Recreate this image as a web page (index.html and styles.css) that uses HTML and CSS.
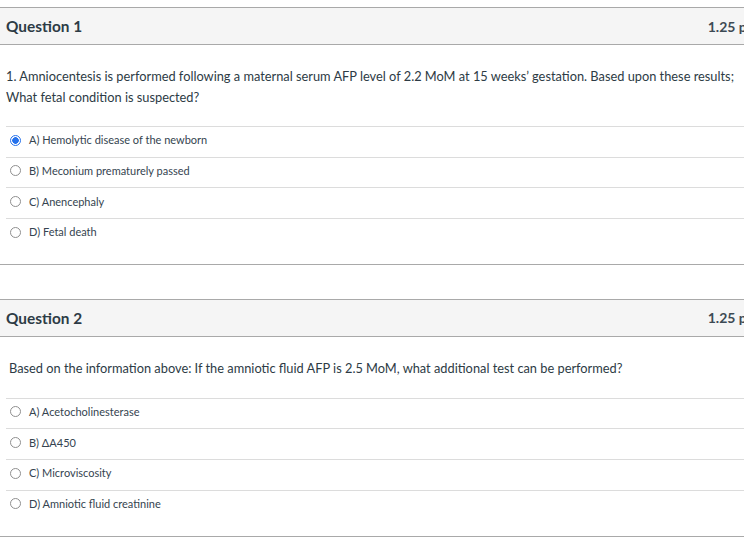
FILE: index.html
```html
<!DOCTYPE html>
<html>
<head>
<meta charset="utf-8">
<link rel="stylesheet" href="styles.css">
</head>
<body>
<div class="page">
  <section class="question">
    <header class="q-header">
      <h2 class="q-title">Question 1</h2>
      <span class="q-points">1.25 pts</span>
    </header>
    <div class="q-text">1. Amniocentesis is performed following a maternal serum AFP level of 2.2 MoM at 15 weeks’ gestation. Based upon these results; What fetal condition is suspected?</div>
    <ul class="answers">
      <li class="answer"><span class="radio checked"></span><span class="label">A) Hemolytic disease of the newborn</span></li>
      <li class="answer"><span class="radio"></span><span class="label">B) Meconium prematurely passed</span></li>
      <li class="answer"><span class="radio"></span><span class="label">C) Anencephaly</span></li>
      <li class="answer"><span class="radio"></span><span class="label">D) Fetal death</span></li>
    </ul>
  </section>
  <section class="question question-last">
    <header class="q-header">
      <h2 class="q-title">Question 2</h2>
      <span class="q-points">1.25 pts</span>
    </header>
    <div class="q-text q-text-indent">Based on the information above: If the amniotic fluid AFP is 2.5 MoM, what additional test can be performed?</div>
    <ul class="answers">
      <li class="answer"><span class="radio"></span><span class="label">A) Acetocholinesterase</span></li>
      <li class="answer"><span class="radio"></span><span class="label">B) ΔA450</span></li>
      <li class="answer"><span class="radio"></span><span class="label">C) Microviscosity</span></li>
      <li class="answer"><span class="radio"></span><span class="label">D) Amniotic fluid creatinine</span></li>
    </ul>
  </section>
</div>
</body>
</html>
```
FILE: styles.css
```css
html, body {
  margin: 0;
  padding: 0;
  overflow: hidden;
  background: #fff;
}
body {
  font-family: Lato, "Open Sans", sans-serif;
  color: #2d3b45;
}
.page {
  width: 776px;
  padding-top: 7px;
  display: flex;
  flex-direction: column;
  gap: 34px;
}
.question {
  border-bottom: 1px solid #a9a9a9;
  padding-bottom: 15px;
}
.question-last {
  padding-bottom: 16px;
}
.q-header {
  display: flex;
  align-items: center;
  justify-content: space-between;
  height: 36px;
  background: #f5f5f5;
  border-top: 1px solid #a9a9a9;
  border-bottom: 1px solid #a9a9a9;
  padding: 0 18px 0 6px;
}
.q-title {
  margin: 0;
  font-size: 15.4px;
  font-weight: 700;
}
.q-points {
  font-size: 14px;
  font-weight: 700;
  color: #3d4a54;
  white-space: nowrap;
}
.q-text {
  padding: 21px 6px 18px 6px;
  font-size: 12.8px;
  line-height: 21px;
  width: 744px;
  box-sizing: border-box;
}
.q-text-indent {
  padding-left: 9px;
  padding-bottom: 19px;
}
.answers {
  list-style: none;
  margin: 0 0 0 6px;
  padding: 0;
}
.answer {
  display: flex;
  align-items: center;
  gap: 8px;
  height: 26.67px;
  padding-bottom: 3px;
  box-sizing: content-box;
  border-top: 1px solid #dcdcdc;
  padding-left: 4px;
  font-size: 11px;
}
.radio {
  width: 9px;
  height: 9px;
  border: 1px solid #8f8f8f;
  border-radius: 50%;
  box-sizing: content-box;
  flex: none;
}
.radio.checked {
  border-color: #2672ec;
  background: radial-gradient(circle, #2672ec 0 3px, #fff 3.6px);
}
.label {
  line-height: 14px;
  color: #354450;
}
```
